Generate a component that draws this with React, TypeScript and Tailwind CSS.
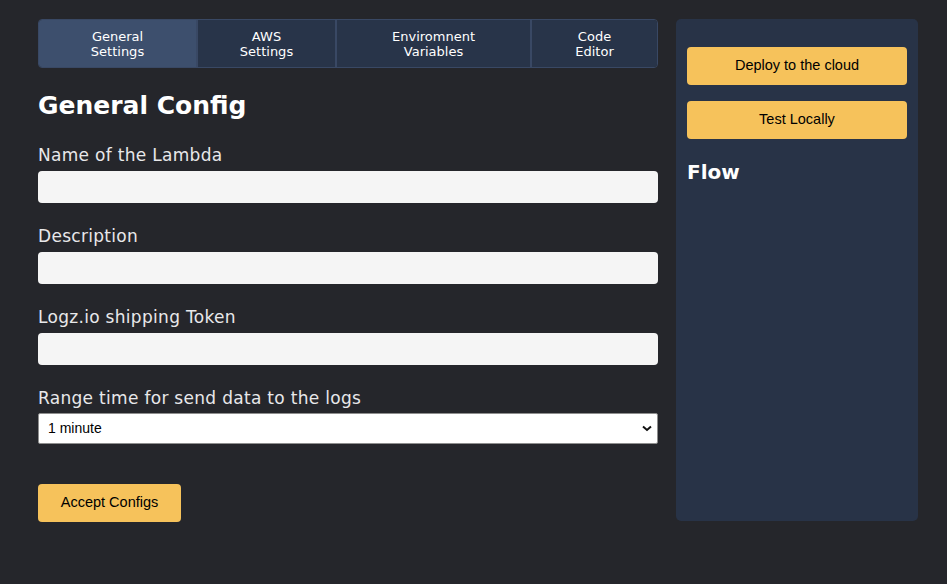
import React from "react";

const mont = { fontFamily: '"DejaVu Sans", "Open Sans", sans-serif' };
const arial = { fontFamily: '"Liberation Sans", Arial, sans-serif' };

export default function App() {
  const tabs = [
    { a: "General", b: "Settings", w: "w-[157px]", active: true },
    { a: "AWS", b: "Settings", w: "w-[139px]", active: false },
    { a: "Enviromnent", b: "Variables", w: "w-[195px]", active: false },
    { a: "Code", b: "Editor", w: "flex-1", active: false },
  ];
  const fields = ["Name of the Lambda", "Description", "Logz.io shipping Token"];
  return (
    <div className="w-[947px] h-[584px] bg-[#25262b] flex items-start gap-[18px] pl-[38px] pt-[19px]" style={mont}>
      <div className="w-[620px] flex flex-col">
        <div className="flex h-[49px] rounded-[4px] border border-[#394864] overflow-hidden">
          {tabs.map((t, i) => (
            <div
              key={i}
              className={`${t.w} flex flex-col items-center justify-center text-white text-[13px] leading-[15px] ${
                t.active ? "bg-[#3d4f6d]" : "bg-[#283449]"
              } ${i > 0 ? "border-l-2 border-[#394864]" : ""}`}
            >
              <span>{t.a}</span>
              <span>{t.b}</span>
            </div>
          ))}
        </div>
        <h1 className="text-white font-bold text-[25px] leading-[30px] mt-[23px]">General Config</h1>
        <div className="flex flex-col mt-[24px]">
          {fields.map((f) => (
            <div key={f} className="flex flex-col mb-[23px]">
              <label className="text-[#e8e8ea] text-[17px] leading-[20px] tracking-[0.3px] mb-[6px]">{f}</label>
              <input className="h-[32px] rounded-[4px] bg-[#f5f5f5] outline-none" />
            </div>
          ))}
          <label className="text-[#e8e8ea] text-[17px] leading-[20px] tracking-[0.3px] mb-[5px]">
            Range time for send data to the logs
          </label>
          <div className="relative h-[31px] bg-white rounded-[2px] border border-[#8e8e8e] flex items-center pl-[9px]">
            <span className="text-black text-[14px]" style={arial}>
              1 minute
            </span>
            <svg className="absolute right-[5px] top-[11px]" width="10" height="7" viewBox="0 0 10 7">
              <path d="M1 1.5 L5 5 L9 1.5" fill="none" stroke="#111" strokeWidth="2" />
            </svg>
          </div>
          <button className="mt-[40px] w-[143px] h-[38px] rounded-[4px] bg-[#f6c25b] text-black text-[14.5px]" style={arial}>
            Accept Configs
          </button>
        </div>
      </div>
      <div className="w-[242px] h-[502px] rounded-[5px] bg-[#283347] px-[11px] pt-[28px] flex flex-col">
        {["Deploy to the cloud", "Test Locally"].map((b) => (
          <button key={b} className="h-[38px] rounded-[4px] bg-[#f6c25b] text-black text-[14.5px] mb-[16px]" style={arial}>
            {b}
          </button>
        ))}
        <h2 className="text-white font-bold text-[20px] leading-[24px] mt-[5px]">Flow</h2>
      </div>
    </div>
  );
}
